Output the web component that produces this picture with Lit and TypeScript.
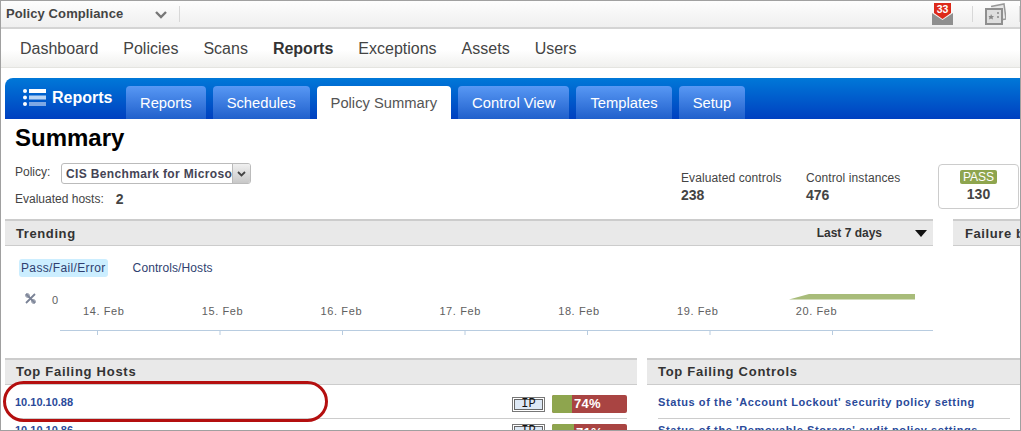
import { LitElement, html, css, svg } from "lit";
import { customElement } from "lit/decorators.js";

const days = ["14. Feb", "15. Feb", "16. Feb", "17. Feb", "18. Feb", "19. Feb", "20. Feb"];

@customElement("app-root")
export class AppRoot extends LitElement {
  static styles = css`
    :host {
      display: block;
      position: relative;
      width: 1021px;
      height: 431px;
      box-sizing: border-box;
      border: 1px solid #a0a0a0;
      overflow: hidden;
      background: #fff;
      font-family: "Liberation Sans", Arial, sans-serif;
      color: #444;
    }
    .top {
      height: 26px;
      display: flex;
      align-items: center;
      padding-left: 5px;
      background: linear-gradient(#fdfdfd, #efefef);
      border-bottom: 2px solid #d4d4d4;
      font-weight: bold;
      color: #444;
    }
    .product { width: 148px; font-size: 13px; letter-spacing: 0.1px; margin-top: -2px; }
    .chev { width: 14px; height: 9px; margin-right: 11px; }
    .sep { width: 1px; height: 16px; background: #d8d8d8; }
    .top-right { margin-left: auto; display: flex; align-items: center; }
    .mail { position: relative; width: 21px; height: 24px; margin-right: 19px; }
    .mail svg { display: block; }
    .mail b {
      position: absolute; left: 0; top: 2px; width: 21px; text-align: center;
      font-size: 10.5px; line-height: 11px; color: #fff;
    }
    .gallery { margin: 0 13px 0 12px; display: block; }
    .nav {
      height: 36px;
      padding: 2px 0 0 19px;
      display: flex;
      align-items: center;
      gap: 25px;
      font-size: 16px;
      color: #444;
      background: linear-gradient(#fff 55%, #f0f0ee);
      border-bottom: 1px solid #e4e4e0;
    }
    .nav .on { font-weight: bold; color: #333; }
    .panel {
      margin: 10px 0 0 4px;
      height: 41px;
      display: flex;
      align-items: flex-end;
      border-top-left-radius: 8px;
      background: linear-gradient(#0078d8, #0040c0);
    }
    .brand {
      width: 121px;
      height: 41px;
      box-sizing: border-box;
      padding: 0 0 2px 18px;
      display: flex;
      align-items: center;
      gap: 6px;
      font-size: 16px;
      font-weight: bold;
      color: #fff;
    }
    .tabs { display: flex; gap: 7px; }
    .tab {
      height: 33px;
      line-height: 34px;
      padding: 0 14px;
      font-size: 14.75px;
      color: #fff;
      border-radius: 4px 4px 0 0;
      background: linear-gradient(#5898f4, #2060cc);
    }
    .tab.on { background: #fff; color: #555; }
    h1 {
      margin: 5px 0 0 14px;
      font-size: 24px;
      line-height: 28px;
      color: #000;
    }
    .info { display: flex; height: 67px; }
    .left { width: 680px; padding: 11px 0 0 14px; box-sizing: border-box; font-size: 12px; }
    .policy { display: flex; align-items: center; height: 21px; }
    .policy label { width: 46px; margin-top: -3px; }
    .select {
      width: 190px; height: 21px; box-sizing: border-box;
      border: 1px solid #bbb; border-radius: 3px;
      display: flex; align-items: center; overflow: hidden;
      font-size: 12px; font-weight: bold; color: #445; letter-spacing: 0.35px;
    }
    .select span { flex: 1; padding-left: 4px; white-space: nowrap; overflow: hidden; }
    .select i {
      width: 17px; height: 100%; flex: none; display: flex; align-items: center; justify-content: center;
      border-left: 1px solid #bbb; background: linear-gradient(#f0f0f0, #c8c8c8);
    }
    .hosts { margin-top: 7px; display: flex; align-items: center; height: 16px; }
    .hosts b { font-size: 14px; margin-left: 12px; }
    .stat { font-size: 12px; letter-spacing: 0.1px; padding-top: 19px; width: 125px; line-height: 14px; }
    .stat b { display: block; font-size: 14px; line-height: 20px; letter-spacing: 0; }
    .stat + .stat { width: 132px; }
    .pass {
      width: 81px; height: 45px; margin-top: 12px; box-sizing: border-box;
      border: 1px solid #ccc; border-radius: 4px;
      display: flex; flex-direction: column; align-items: center; padding-top: 5px;
      font-weight: bold; font-size: 14px; line-height: 20px;
    }
    .pass span {
      background: #8ea54e; color: #fff; font-weight: normal; font-size: 12px;
      line-height: 14px; padding: 0 3px; border-radius: 2px;
    }
    .row2 { display: flex; gap: 20px; margin: 0 0 0 4px; }
    .hd {
      height: 24px;
      background: #e9e9e9;
      border-top: 2px solid #ccc;
      border-bottom: 1px solid #ccc;
      display: flex;
      align-items: center;
      padding-left: 11px;
      font-size: 13px;
      font-weight: bold;
      letter-spacing: 0.6px;
      color: #333;
      white-space: nowrap;
      overflow: hidden;
    }
    .trend { width: 928px; flex: none; }
    .trend .hd { padding-right: 6px; }
    .range { margin-left: auto; font-size: 12px; letter-spacing: 0; display: flex; align-items: center; gap: 33px; }
    .fail { flex: 1; min-width: 0; }
    .fail .hd { padding-left: 12px; }
    .modes { display: flex; gap: 23px; margin: 13px 0 0 14px; font-size: 12px; letter-spacing: 0.35px; color: #2f3f70; line-height: 18px; }
    .modes span { padding: 0 2px; }
    .modes span + span { letter-spacing: 0.1px; }
    .modes .on { background: #cceeff; border-radius: 3px; }
    .chart { display: block; margin: 9px 0 0 -5px; width: 1000px; height: 72px; }
    .chart text { font: 11px "Liberation Sans", Arial, sans-serif; letter-spacing: 0.6px; fill: #606060; }
    .row3 { display: flex; gap: 10px; margin: 0 0 0 4px; }
    .row3 .hd { letter-spacing: 0.72px; height: 22px; padding-bottom: 2px; }
    .hosts-col { width: 632px; flex: none; }
    .ctrl-col { flex: 1; min-width: 0; }
    .item {
      height: 33px; display: flex; align-items: center; margin: 0 10px;
      border-bottom: 1px solid #ccc;
      font-size: 11px; font-weight: bold; color: #2a4a9a; letter-spacing: 0;
    }
    .ctrl-col .item { letter-spacing: 0.6px; margin-left: 11px; }
    .item + .item { height: 24px; align-items: flex-start; padding-top: 5px; }
    .ip {
      margin: 5px 0 0 auto;
      width: 33px; height: 15px; box-sizing: border-box; border: 1px solid #777;
      box-shadow: inset 0 0 0 1px #fff, inset 0 0 0 2px #666; background: #dde8f5;
      font: 12px/13px "Liberation Mono", monospace; color: #111; text-align: center;
    }
    .bar {
      width: 75px; height: 18px; margin: 5px 0 0 7px; flex: none; display: flex; overflow: hidden;
      border-radius: 2px; background: #a94442; color: #fff; font-size: 13px; line-height: 18px; letter-spacing: 0.3px;
    }
    .item + .item .ip, .item + .item .bar { margin-top: 0; }
    .bar i { background: #8ea54e; display: block; margin-right: 2px; }
    .ring {
      position: absolute; left: 2px; top: 380px; width: 325px; height: 41px; box-sizing: border-box;
      border: 3px solid #b40f0f; border-radius: 21px;
    }
  `;

  render() {
    return html`
      <div class="top">
        <span class="product">Policy Compliance</span>
        <svg class="chev" viewBox="0 0 14 9"><path d="M2 2l5 5 5-5" fill="none" stroke="#777" stroke-width="2.4"/></svg>
        <span class="sep"></span>
        <div class="top-right">
          <div class="mail">
            <svg width="21" height="24" viewBox="0 0 21 24">
              <path d="M0 11l10.500 7L21 11v12H0z" fill="#8f8f8f"/>
              <path d="M2 1h17v10l-8.500 6L2 11z" fill="#dd2a1a"/>
            </svg>
            <b>33</b>
          </div>
          <span class="sep"></span>
          <svg class="gallery" width="21" height="22" viewBox="0 0 21 22">
            <path d="M6 3.500L19 1l2 15-3 .5" fill="#e8e8e8" stroke="#999" stroke-width="1.500"/>
            <rect x="1" y="6" width="16" height="15" fill="#dedede" stroke="#8f8f8f" stroke-width="2"/>
            <path d="M6 11l1 2h2l-1.500 1.500.5 2-2-1-2 1 .5-2L3.500 13h2z" fill="#888"/>
            <circle cx="13" cy="10" r="1" fill="#888"/>
            <circle cx="13" cy="14" r="1" fill="#888"/>
          </svg>
          <span class="sep"></span>
        </div>
      </div>
      <div class="nav">
        <span>Dashboard</span><span>Policies</span><span>Scans</span><span class="on">Reports</span>
        <span>Exceptions</span><span>Assets</span><span>Users</span>
      </div>
      <div class="panel">
        <div class="brand">
          <svg width="23" height="19" viewBox="0 0 23 19">
            <g fill="#fff"><circle cx="2" cy="3" r="2"/><circle cx="2" cy="9.500" r="2"/><circle cx="2" cy="16" r="2"/></g>
            <rect x="6" y="1" width="17" height="4" fill="#fff"/>
            <rect x="6" y="7.500" width="17" height="4" fill="#b8d4f4"/>
            <rect x="6" y="14" width="17" height="4" fill="#7ea8e4"/>
          </svg>
          Reports
        </div>
        <div class="tabs">
          <span class="tab">Reports</span><span class="tab">Schedules</span><span class="tab on">Policy Summary</span>
          <span class="tab">Control View</span><span class="tab">Templates</span><span class="tab">Setup</span>
        </div>
      </div>
      <h1>Summary</h1>
      <div class="info">
        <div class="left">
          <div class="policy">
            <label>Policy:</label>
            <div class="select">
              <span>CIS Benchmark for Microsoft Windows</span>
              <i><svg width="9" height="6" viewBox="0 0 9 6"><path d="M1 1l3.500 3.500L8 1" fill="none" stroke="#444" stroke-width="1.800"/></svg></i>
            </div>
          </div>
          <div class="hosts">Evaluated hosts: <b>2</b></div>
        </div>
        <div class="stat">Evaluated controls<b>238</b></div>
        <div class="stat">Control instances<b>476</b></div>
        <div class="pass"><span>PASS</span>130</div>
      </div>
      <div class="row2">
        <div class="trend">
          <div class="hd">Trending
            <span class="range">Last 7 days
              <svg width="12" height="7" viewBox="0 0 12 7"><path d="M0 0h12L6 7z" fill="#111"/></svg>
            </span>
          </div>
          <div class="modes"><span class="on">Pass/Fail/Error</span><span>Controls/Hosts</span></div>
          <svg class="chart" viewBox="0 0 1000 72">
            <path d="M26 8l9 9M35 8l-9 9" stroke="#7a8296" stroke-width="1.800" fill="none"/>
            <circle cx="27.500" cy="9.500" r="1.800" fill="none" stroke="#7a8296"/><circle cx="33.500" cy="15.500" r="1.800" fill="none" stroke="#7a8296"/>
            <text x="52" y="18">0</text>
            ${days.map((d, i) => svg`<text x="${83 + i * 118.8}" y="29">${d}</text>`)}
            <path d="M789 13.500L809 8H915V13.500z" fill="#a8bc7a"/>
            <path d="M60 44.500H933" stroke="#b8cce0" fill="none"/>
            ${days.map((_, i) => svg`<path d="M${97.500 + i * 122.500} 44v5" stroke="#b8cce0"/>`)}
          </svg>
        </div>
        <div class="fail"><div class="hd">Failure by Technology</div></div>
      </div>
      <div class="row3">
        <div class="hosts-col">
          <div class="hd">Top Failing Hosts</div>
          <div class="item">10.10.10.88<span class="ip">IP</span><span class="bar"><i style="width:20px"></i>74%</span></div>
          <div class="item">10.10.10.86<span class="ip">IP</span><span class="bar"><i style="width:22px"></i>71%</span></div>
        </div>
        <div class="ctrl-col">
          <div class="hd">Top Failing Controls</div>
          <div class="item">Status of the 'Account Lockout' security policy setting</div>
          <div class="item">Status of the 'Removable Storage' audit policy settings</div>
        </div>
      </div>
      <div class="ring"></div>
    `;
  }
}
